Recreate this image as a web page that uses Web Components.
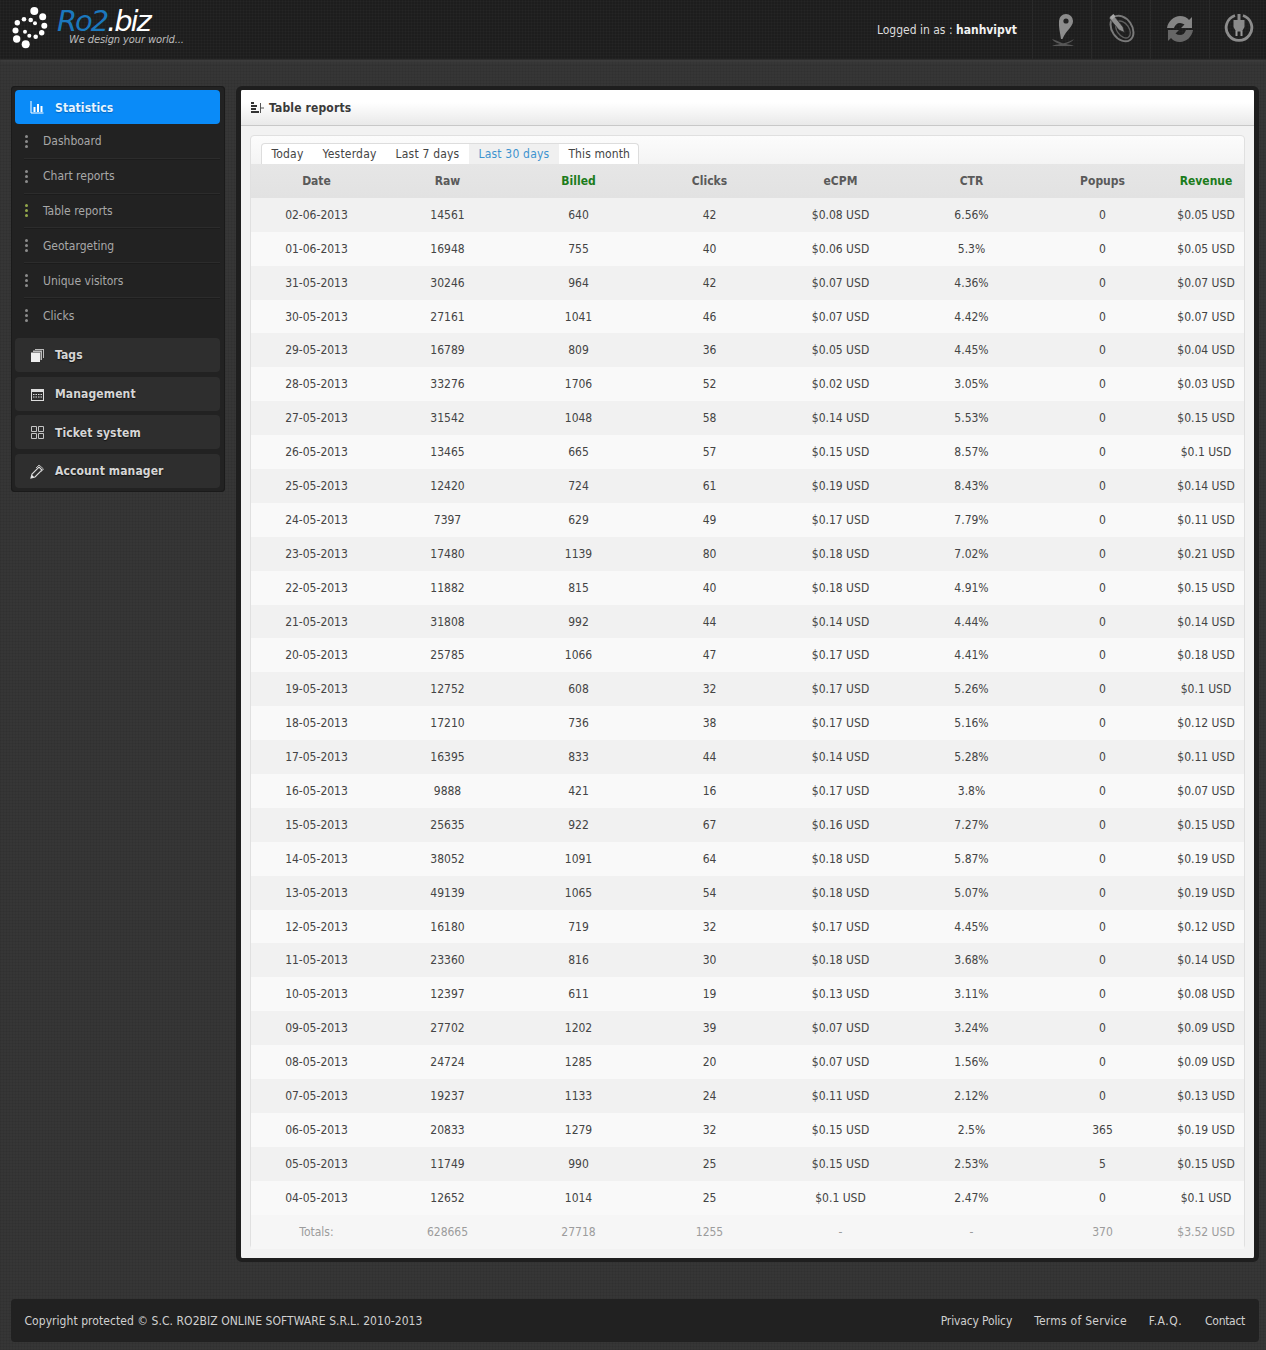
<!DOCTYPE html>
<html>
<head>
<meta charset="utf-8">
<title>Table reports</title>
<style>
  html, body { margin: 0; padding: 0; }
  body {
    background-color: #363636;
    background-image:
      repeating-linear-gradient(0deg, rgba(0,0,0,.05) 0 1px, transparent 1px 3px),
      repeating-linear-gradient(90deg, rgba(0,0,0,.05) 0 1px, transparent 1px 3px);
    font: 12px "DejaVu Sans", Tahoma, sans-serif;
    font-stretch: condensed;
    height: 1350px;
    overflow: hidden;
  }
</style>
</head>
<body>
<ro-header user="hanhvipvt"></ro-header>
<ro-layout>
  <ro-sidebar slot="side">
    <ro-nav-button active icon="stats">Statistics</ro-nav-button>
    <ro-sub-menu>
      <ro-sub-item>Dashboard</ro-sub-item>
      <ro-sub-item>Chart reports</ro-sub-item>
      <ro-sub-item current>Table reports</ro-sub-item>
      <ro-sub-item>Geotargeting</ro-sub-item>
      <ro-sub-item>Unique visitors</ro-sub-item>
      <ro-sub-item last>Clicks</ro-sub-item>
    </ro-sub-menu>
    <ro-nav-button icon="tags">Tags</ro-nav-button>
    <ro-nav-button icon="calendar">Management</ro-nav-button>
    <ro-nav-button icon="grid">Ticket system</ro-nav-button>
    <ro-nav-button icon="pencil">Account manager</ro-nav-button>
  </ro-sidebar>
  <ro-panel heading="Table reports">
    <ro-tabs active="3"></ro-tabs>
    <ro-report-table></ro-report-table>
  </ro-panel>
</ro-layout>
<ro-footer></ro-footer>

<script>
// Every element owns its template and styles, the data lives in the table.
const make = (html) => {
  const t = document.createElement("template");
  t.innerHTML = html;
  return t;
};

const mount = (el, template) => {
  el.attachShadow({ mode: "open" });
  el.shadowRoot.appendChild(template.content.cloneNode(true));
};

const headerTemplate = make(`
  <style>
    :host {
      display: flex;
      align-items: stretch;
      height: 59px;
      background-color: #1d1d1d;
      background-image:
        repeating-linear-gradient(0deg, rgba(255,255,255,.018) 0 1px, transparent 1px 3px),
        repeating-linear-gradient(90deg, rgba(255,255,255,.018) 0 1px, transparent 1px 3px);
      border-bottom: 1px solid #2c2c2c;
      box-shadow: 0 2px 3px rgba(70,70,70,.5);
      color: #ddd;
    }
    .logo {
      position: relative;
      width: 190px;
      margin-left: 11px;
      flex: none;
    }
    .logo svg { position: absolute; left: 0; top: 6px; }
    .name {
      position: absolute;
      left: 46px;
      top: 7px;
      font: italic 200 29px/28px "DejaVu Sans", sans-serif;
      font-stretch: normal;
      letter-spacing: -2.1px;
      color: #fff;
      white-space: nowrap;
    }
    .name b { font-weight: 200; color: #1b78bd; }
    .slogan {
      position: absolute;
      left: 58px;
      top: 35px;
      font: italic 10px/10px "DejaVu Sans", sans-serif;
      letter-spacing: -.15px;
      color: #bbb;
      white-space: nowrap;
    }
    .user {
      margin-left: auto;
      align-self: center;
      padding-right: 15px;
      white-space: nowrap;
    }
    .user b { color: #f2f2f2; }
    .tool {
      width: 58px;
      display: flex;
      align-items: center;
      justify-content: center;
      border-left: 1px solid #2a2a2a;
    }
    .tools { display: flex; margin-right: -2px; }
  </style>
  <div class="logo">
    <svg width="40" height="44" viewBox="11 6 40 44" fill="#fff">
      <circle cx="34.3" cy="11" r="4"/><circle cx="42.7" cy="16.7" r="3.5"/>
      <circle cx="44.3" cy="25.7" r="3"/><circle cx="41.7" cy="32.7" r="2.7"/>
      <circle cx="35.7" cy="36.7" r="2.3"/><circle cx="29.3" cy="35.7" r="2"/>
      <circle cx="25" cy="31.7" r="2"/><circle cx="15.5" cy="30.5" r="3"/>
      <circle cx="16.7" cy="39" r="3.7"/><circle cx="25.7" cy="44.3" r="4"/>
      <circle cx="17.3" cy="22.7" r="2.7"/><circle cx="24" cy="19.3" r="2.3"/>
      <circle cx="30.7" cy="20" r="2.3"/><circle cx="35" cy="23.3" r="2"/>
    </svg>
    <div class="name"><b>Ro2</b>.biz</div>
    <div class="slogan">We design your world...</div>
  </div>
  <div class="user">Logged in as : <b id="user"></b></div>
  <div class="tools">
    <div class="tool">
      <svg width="30" height="34" viewBox="0 0 30 34" fill="#8c8c8c">
        <path d="M19 1a7 7 0 0 1 7 7c0 6-7 9-10.500 18h-1.500c-1-7-2.500-12-2-18a7 7 0 0 1 7-7z"/>
        <circle cx="19" cy="8" r="2.600" fill="#222"/>
        <path d="M5 26c4 1 7 3 10 4s8-2 12-4c-2 3-5 4-8 5 3 .5 6 1 8 2H5c2-1 5-1.500 8-2-3-1-6-2-8-5z" fill="#565656"/>
      </svg>
    </div>
    <div class="tool">
      <svg width="30" height="32" viewBox="0 0 30 32" fill="none" style="margin-top:-3px">
        <ellipse cx="16" cy="16.500" rx="10" ry="14" transform="rotate(-35 16 16.500)" stroke="#7a7a7a" stroke-width="2"/>
        <ellipse cx="17" cy="17.500" rx="6" ry="9.500" transform="rotate(-35 17 17.500)" stroke="#606060" stroke-width="1.400"/>
        <path d="M3 6l4-3.500 10 12.500 1.500 5.500-5.500-2.500z" fill="#8e8e8e" stroke="#2a2a2a" stroke-width=".7"/>
        <path d="M4 5l3.500-3 2 2.400-3.500 3z" fill="#aaa"/>
      </svg>
    </div>
    <div class="tool">
      <svg width="30" height="30" viewBox="0 0 30 30" fill="#858585" style="margin-top:-2px">
        <path d="M2 14C3 7 9 2 15 2c4 0 7 1.500 9 4l3-3v11H16l3.500-3.500C18 9.500 16.500 9 15 9c-3 0-5 2-6 5z"/>
        <path d="M28 16c-1 7-7 12-13 12-4 0-7-1.500-9-4l-3 3V16h11l-3.500 3.500C12 20.500 13.500 21 15 21c3 0 5-2 6-5z" fill="#666"/>
      </svg>
    </div>
    <div class="tool">
      <svg width="30" height="30" viewBox="0 0 30 30" fill="none" style="margin-top:-4px">
        <path d="M11 2.500a12.800 12.800 0 1 0 8 0" stroke="#8c8c8c" stroke-width="2.800"/>
        <path d="M13.500 1h3v6h4v7l-2.500 4.500h-6L9.500 14V7h4z" fill="#8a8a8a"/>
        <path d="M11.500 18h2v5h-2zM16.500 18h2v5h-2z" fill="#9a9a9a"/>
      </svg>
    </div>
  </div>
`);

class RoHeader extends HTMLElement {
  constructor() {
    super();
    mount(this, headerTemplate);
  }
  connectedCallback() {
    this.shadowRoot.getElementById("user").textContent = this.getAttribute("user");
  }
}

const layoutTemplate = make(`
  <style>
    :host {
      display: grid;
      grid-template-columns: 214px 1023px;
      column-gap: 11px;
      align-items: start;
      padding: 26px 0 0 11px;
    }
  </style>
  <slot name="side"></slot>
  <slot></slot>
`);

class RoLayout extends HTMLElement {
  constructor() {
    super();
    mount(this, layoutTemplate);
  }
}

const sidebarTemplate = make(`
  <style>
    :host {
      display: flex;
      flex-direction: column;
      height: 406px;
      box-sizing: border-box;
      padding: 4px 5px 4px 4px;
      background: #222;
      border-radius: 4px;
      box-shadow: inset 0 0 0 1px #1a1a1a;
    }
  </style>
  <slot></slot>
`);

class RoSidebar extends HTMLElement {
  constructor() {
    super();
    mount(this, sidebarTemplate);
  }
}

const NAV_ICONS = {
  stats: `<path d="M1 1v12h12.500" stroke="#fff" fill="none"/><path d="M3.500 7h2v5h-2zM7 4h2v8H7zM10.500 6h2v6h-2z" fill="#fff"/>`,
  tags: `<path d="M1 4.500h9V14H1z" fill="#eee"/><path d="M3 4V2.500h9V12h-1.500V4zM5 2V1h9v9h-1V2z" fill="#bbb"/>`,
  calendar: `<rect x="1.500" y="2.500" width="12" height="11" fill="none" stroke="#ddd"/><path d="M1 2h13v3H1z" fill="#ddd"/><path d="M3 7h1.500v1H3zM5.500 7H7v1H5.500zM8 7h1.500v1H8zM10.500 7H12v1h-1.500zM3 9.500h1.500v1H3zM5.500 9.500H7v1H5.500zM8 9.500h1.500v1H8zM10.500 9.500H12v1h-1.500z" fill="#ddd"/>`,
  grid: `<path d="M1.500 1.500h5v5h-5zM8.500 1.500h5v5h-5zM1.500 8.500h5v5h-5zM8.500 8.500h5v5h-5z" fill="none" stroke="#c4c4c4"/>`,
  pencil: `<path d="M1 14l1-4 7-7 3 3-7 7z" fill="none" stroke="#ddd" stroke-width="1.100"/><path d="M6 4l3-3 4.500 4-3 3" fill="none" stroke="#bbb"/><path d="M1 14l3-1-2-2z" fill="#eee"/>`,
};

const navButtonTemplate = make(`
  <style>
    :host {
      display: flex;
      align-items: center;
      height: 34px;
      flex: none;
      margin-bottom: 4.600px;
      box-sizing: border-box;
      padding: 1px 0 0 15px;
      border-radius: 4px;
      background: #2e2e2e;
      color: #d6d6d6;
      font-size: 12px;
      letter-spacing: .12px;
      font-weight: bold;
      text-shadow: 0 1px 1px #111;
    }
    :host([active]) {
      margin-bottom: 0;
      background: #0a8bf8;
      color: #e6f4ff;
      text-shadow: 0 1px 1px #0664b8;
    }
    svg { flex: none; margin-right: 10px; }
  </style>
  <svg width="15" height="15" viewBox="0 0 15 15"></svg>
  <slot></slot>
`);

class RoNavButton extends HTMLElement {
  constructor() {
    super();
    mount(this, navButtonTemplate);
  }
  connectedCallback() {
    this.shadowRoot.querySelector("svg").innerHTML = NAV_ICONS[this.getAttribute("icon")] || "";
  }
}

const subMenuTemplate = make(`
  <style>
    :host {
      display: block;
      margin-bottom: 5.200px;
    }
  </style>
  <slot></slot>
`);

class RoSubMenu extends HTMLElement {
  constructor() {
    super();
    mount(this, subMenuTemplate);
  }
}

const subItemTemplate = make(`
  <style>
    :host {
      display: flex;
      align-items: center;
      height: 34.800px;
      box-sizing: border-box;
      padding-top: 1px;
      margin-left: 9px;
      border-bottom: 1px solid #2c2c2c;
      box-shadow: 0 1px 0 #1c1c1c;
      color: #a8a8a8;
    }
    :host([last]) { border-bottom: 0; box-shadow: none; }
    .dots {
      display: flex;
      flex-direction: column;
      gap: 2px;
      width: 3px;
      margin: 0 15px 0 1px;
      flex: none;
    }
    .dots i {
      display: block;
      width: 3px;
      height: 3px;
      background: #8c8c8c;
      border-radius: 1.500px;
    }
    :host([current]) .dots i { background: #93a84c; }
  </style>
  <div class="dots"><i></i><i></i><i></i></div>
  <span><slot></slot></span>
`);

class RoSubItem extends HTMLElement {
  constructor() {
    super();
    mount(this, subItemTemplate);
  }
}

const panelTemplate = make(`
  <style>
    :host {
      display: block;
      height: 1176px;
      box-sizing: border-box;
      border: solid #1e1e1e;
      border-width: 4px 5px;
      border-radius: 6px;
      background: #f2f2f2;
      color: #333;
    }
    .head {
      display: flex;
      align-items: center;
      gap: 5px;
      height: 36px;
      box-sizing: border-box;
      padding: 0 0 0 10px;
      background: linear-gradient(#fff 35%, #e9e9e9);
      border-bottom: 1px solid #c8c8c8;
      border-radius: 3px 3px 0 0;
      font-size: 12px;
      letter-spacing: .15px;
      font-weight: bold;
      color: #3a3a3a;
    }
    .body { padding: 9px; }
    .box {
      height: 1114px;
      box-sizing: border-box;
      border: 1px solid #e0e0e0;
      border-radius: 4px;
      background: linear-gradient(#fcfcfc, #f4f4f4 28px);
      padding-top: 7px;
    }
  </style>
  <div class="head">
    <svg width="13" height="12" viewBox="0 0 13 12">
      <path d="M0 0h3v2H0zM0 3h6v2H0zM0 6h5v2H0zM0 9h8v2H0z" fill="#333"/>
      <path d="M9.500 1v10M9.500 6H13" stroke="#555" fill="none"/>
    </svg>
    <span id="heading"></span>
  </div>
  <div class="body"><div class="box"><slot></slot></div></div>
`);

class RoPanel extends HTMLElement {
  constructor() {
    super();
    mount(this, panelTemplate);
  }
  connectedCallback() {
    this.shadowRoot.getElementById("heading").textContent = this.getAttribute("heading");
  }
}

const tabsTemplate = make(`
  <style>
    :host {
      display: flex;
      height: 21px;
      margin-left: 10px;
    }
    .tabs {
      display: flex;
      border: 1px solid #ddd;
      border-bottom: 0;
      border-radius: 4px 4px 0 0;
      background: #fff;
    }
    a {
      display: block;
      padding: 0 9.500px;
      line-height: 21px;
      letter-spacing: .2px;
      color: #444;
      white-space: nowrap;
    }
    a:last-child { padding-right: 8.500px; letter-spacing: .1px; }
    a.on {
      background: #f0f0f0;
      color: #3e93cf;
    }
  </style>
  <div class="tabs"></div>
`);

class RoTabs extends HTMLElement {
  constructor() {
    super();
    mount(this, tabsTemplate);
  }
  connectedCallback() {
    const active = parseInt(this.getAttribute("active"), 10);
    const box = this.shadowRoot.querySelector(".tabs");
    ["Today", "Yesterday", "Last 7 days", "Last 30 days", "This month"].forEach((name, i) => {
      const a = document.createElement("a");
      a.textContent = name;
      if (i === active) a.className = "on";
      box.appendChild(a);
    });
  }
}

// date, raw, billed, clicks, ecpm, ctr, popups, revenue
const ROWS = `02-06-2013 14561 640 42 0.08 6.56 0 0.05
01-06-2013 16948 755 40 0.06 5.3 0 0.05
31-05-2013 30246 964 42 0.07 4.36 0 0.07
30-05-2013 27161 1041 46 0.07 4.42 0 0.07
29-05-2013 16789 809 36 0.05 4.45 0 0.04
28-05-2013 33276 1706 52 0.02 3.05 0 0.03
27-05-2013 31542 1048 58 0.14 5.53 0 0.15
26-05-2013 13465 665 57 0.15 8.57 0 0.1
25-05-2013 12420 724 61 0.19 8.43 0 0.14
24-05-2013 7397 629 49 0.17 7.79 0 0.11
23-05-2013 17480 1139 80 0.18 7.02 0 0.21
22-05-2013 11882 815 40 0.18 4.91 0 0.15
21-05-2013 31808 992 44 0.14 4.44 0 0.14
20-05-2013 25785 1066 47 0.17 4.41 0 0.18
19-05-2013 12752 608 32 0.17 5.26 0 0.1
18-05-2013 17210 736 38 0.17 5.16 0 0.12
17-05-2013 16395 833 44 0.14 5.28 0 0.11
16-05-2013 9888 421 16 0.17 3.8 0 0.07
15-05-2013 25635 922 67 0.16 7.27 0 0.15
14-05-2013 38052 1091 64 0.18 5.87 0 0.19
13-05-2013 49139 1065 54 0.18 5.07 0 0.19
12-05-2013 16180 719 32 0.17 4.45 0 0.12
11-05-2013 23360 816 30 0.18 3.68 0 0.14
10-05-2013 12397 611 19 0.13 3.11 0 0.08
09-05-2013 27702 1202 39 0.07 3.24 0 0.09
08-05-2013 24724 1285 20 0.07 1.56 0 0.09
07-05-2013 19237 1133 24 0.11 2.12 0 0.13
06-05-2013 20833 1279 32 0.15 2.5 365 0.19
05-05-2013 11749 990 25 0.15 2.53 5 0.15
04-05-2013 12652 1014 25 0.1 2.47 0 0.1`.split("\n").map((line) => line.split(" "));

const tableTemplate = make(`
  <style>
    :host {
      display: grid;
      grid-template-columns: repeat(7, 131px) 76px;
      grid-auto-rows: 33.900px;
      color: #444;
      text-align: center;
    }
    .row { display: contents; }
    .row > div {
      box-sizing: border-box;
      padding-top: 1px;
      line-height: 33.900px;
      white-space: nowrap;
    }
    .th > div {
      background: linear-gradient(#e6e6e6, #e2e2e2);
      color: #5a5a5a;
      font-weight: bold;
    }
    .th > .green { color: #1c7c1c; }
    .row:not(.th):nth-child(even) > div { background: #f9f9f9; }
    .row:not(.th):nth-child(odd) > div { background: #f1f1f1; }
    .row.total > div { color: #9c9c9c; background: #f6f6f6 !important; }
  </style>
`);

class RoReportTable extends HTMLElement {
  constructor() {
    super();
    mount(this, tableTemplate);
  }
  _addRow(cells, cls) {
    const row = document.createElement("div");
    row.className = "row " + cls;
    cells.forEach((text) => {
      const cell = document.createElement("div");
      cell.textContent = text;
      if (cls === "th" && (text === "Billed" || text === "Revenue")) cell.className = "green";
      row.appendChild(cell);
    });
    this.shadowRoot.appendChild(row);
  }
  connectedCallback() {
    this._addRow(["Date", "Raw", "Billed", "Clicks", "eCPM", "CTR", "Popups", "Revenue"], "th");
    ROWS.forEach(([date, raw, billed, clicks, ecpm, ctr, popups, revenue]) => {
      this._addRow([date, raw, billed, clicks, `$${ecpm} USD`, `${ctr}%`, popups, `$${revenue} USD`], "");
    });
    this._addRow(["Totals:", "628665", "27718", "1255", "-", "-", "370", "$3.52 USD"], "total");
  }
}

const footerTemplate = make(`
  <style>
    :host {
      display: flex;
      align-items: center;
      justify-content: space-between;
      width: 1248px;
      height: 43px;
      box-sizing: border-box;
      margin: 37px 0 0 11px;
      padding: 0 14px 0 13.500px;
      background: #212121;
      border-radius: 4px;
      color: #d0d0d0;
      white-space: nowrap;
    }
    .copy { letter-spacing: .05px; }
    nav { display: flex; gap: 22px; }
  </style>
  <span class="copy">Copyright protected © S.C. RO2BIZ ONLINE SOFTWARE S.R.L. 2010-2013</span>
  <nav>
    <span style="letter-spacing:-.15px">Privacy Policy</span>
    <span style="letter-spacing:.25px">Terms of Service</span>
    <span style="letter-spacing:.5px;margin-right:1px">F.A.Q.</span>
    <span style="letter-spacing:-.3px">Contact</span>
  </nav>
`);

class RoFooter extends HTMLElement {
  constructor() {
    super();
    mount(this, footerTemplate);
  }
}

customElements.define("ro-header", RoHeader);
customElements.define("ro-layout", RoLayout);
customElements.define("ro-sidebar", RoSidebar);
customElements.define("ro-nav-button", RoNavButton);
customElements.define("ro-sub-menu", RoSubMenu);
customElements.define("ro-sub-item", RoSubItem);
customElements.define("ro-panel", RoPanel);
customElements.define("ro-tabs", RoTabs);
customElements.define("ro-report-table", RoReportTable);
customElements.define("ro-footer", RoFooter);
</script>
</body>
</html>
